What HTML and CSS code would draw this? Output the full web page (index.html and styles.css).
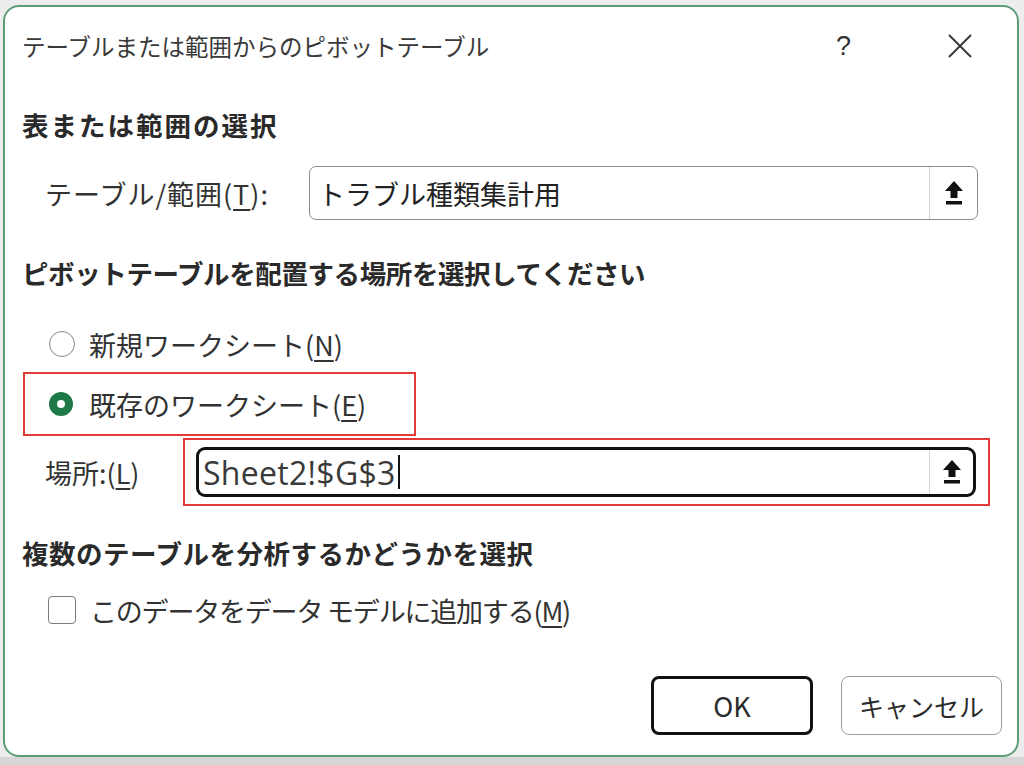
FILE: index.html
```html
<!DOCTYPE html>
<html lang="ja">
<head>
    <meta charset="UTF-8">
    <meta name="viewport" content="width=device-width, initial-scale=1.0">
    <title>テーブルまたは範囲からのピボットテーブル</title>
    <link rel="stylesheet" href="styles.css">
</head>
<body>
    <div class="dialog">
        <div class="titlebar">
            <span class="title">テーブルまたは範囲からのピボットテーブル</span>
            <span class="help">?</span>
            <svg class="close" width="26" height="26" viewBox="0 0 26 26">
                <path d="M2 2 L24 24 M24 2 L2 24" stroke="#333" stroke-width="1.8" fill="none"/>
            </svg>
        </div>

        <div class="heading h-first">表または範囲の選択</div>
        <div class="field-row range-row">
            <span class="label range-label">テーブル/範囲(<u>T</u>):</span>
            <div class="refbox">
                <span class="ref-text">トラブル種類集計用</span>
                <span class="ref-btn">
                    <svg width="22" height="26" viewBox="0 0 22 26">
                        <path d="M11 1 L2 11 H7.5 V18 H14.5 V11 H20 Z" fill="#111"/>
                        <rect x="3" y="21" width="16" height="3.5" fill="#111"/>
                    </svg>
                </span>
            </div>
        </div>

        <div class="heading h-second">ピボットテーブルを配置する場所を選択してください</div>
        <div class="option opt-new">
            <span class="radio"></span>
            <span>新規ワークシート(<u>N</u>)</span>
        </div>
        <div class="highlight hl-existing">
            <div class="option opt-existing">
                <span class="radio checked"></span>
                <span>既存のワークシート(<u>E</u>)</span>
            </div>
        </div>
        <div class="field-row loc-row">
            <span class="label loc-label">場所:(<u>L</u>)</span>
            <div class="highlight hl-location">
                <div class="refbox active">
                    <span class="ref-text sheet-ref">Sheet2!$G$3<span class="caret"></span></span>
                    <span class="ref-btn">
                        <svg width="22" height="26" viewBox="0 0 22 26">
                            <path d="M11 1 L2 11 H7.5 V18 H14.5 V11 H20 Z" fill="#111"/>
                            <rect x="3" y="21" width="16" height="3.5" fill="#111"/>
                        </svg>
                    </span>
                </div>
            </div>
        </div>

        <div class="heading h-third">複数のテーブルを分析するかどうかを選択</div>
        <div class="option opt-model">
            <span class="checkbox"></span>
            <span class="model-text">このデータをデータ モデルに追加する(<u>M</u>)</span>
        </div>

        <div class="buttons">
            <button class="btn btn-default">OK</button>
            <button class="btn btn-cancel">キャンセル</button>
        </div>
    </div>
    <div class="bottom-strip"></div>
</body>
</html>
```

FILE: styles.css
```css
body {
    margin: 0;
    background: #ededed;
    font-family: "Noto Sans CJK JP", "Liberation Sans", sans-serif;
    color: #333;
    overflow: hidden;
}
.dialog {
    margin: 5px 0 0 3px;
    width: 1016px;
    height: 752px;
    box-sizing: border-box;
    border: 2px solid #5a9e78;
    border-radius: 16px;
    background: #fff;
    padding-left: 17px;
}
.bottom-strip {
    height: 8px;
    background: #d6d6d6;
}
.titlebar {
    display: flex;
    align-items: center;
    height: 78px;
    padding-right: 44px;
}
.title {
    font-size: 23.5px;
    color: #3a3a3a;
}
.help {
    margin-left: auto;
    margin-right: 96px;
    font-family: "Liberation Sans", sans-serif;
    font-size: 27px;
    color: #333;
}
.heading {
    height: 34px;
    line-height: 34px;
    font-size: 26.5px;
    font-weight: bold;
    color: #2a2a2a;
}
.h-first {
    margin-top: 23px;
    letter-spacing: 2px;
}
.h-second {
    margin-top: 36px;
    letter-spacing: -0.4px;
}
.h-third {
    margin-top: 30px;
    letter-spacing: 0.5px;
}
u {
    text-decoration-thickness: 1.5px;
    text-underline-offset: 4px;
}
.field-row {
    display: flex;
    align-items: center;
    padding-left: 23px;
    font-size: 27px;
}
.range-row {
    margin-top: 24px;
}
.range-label {
    width: 264px;
    letter-spacing: 1px;
}
.refbox {
    display: flex;
    align-items: stretch;
    box-sizing: border-box;
    width: 669px;
    height: 54px;
    border: 1px solid #8c8c8c;
    border-radius: 7px;
}
.ref-text {
    flex: 1;
    display: flex;
    align-items: center;
    padding-left: 8px;
    font-size: 27px;
    color: #222;
}
.ref-btn {
    width: 47px;
    display: flex;
    align-items: center;
    justify-content: center;
    border-left: 1px solid #d4d4d4;
}
.option {
    display: flex;
    align-items: center;
    gap: 14px;
    height: 40px;
    font-size: 27px;
}
.opt-new {
    margin-top: 34px;
    padding-left: 27px;
}
.highlight {
    box-sizing: border-box;
    border: 2px solid #e33b3b;
}
.hl-existing {
    margin-top: 8px;
    margin-left: 1px;
    width: 393px;
    height: 64px;
}
.opt-existing {
    height: 60px;
    padding-left: 24px;
    gap: 16px;
}
.radio {
    box-sizing: border-box;
    width: 26px;
    height: 26px;
    border: 1.5px solid #858585;
    border-radius: 50%;
}
.radio.checked {
    width: 24px;
    height: 24px;
    border: 8px solid #1e7847;
}
.loc-row {
    margin-top: 2px;
}
.loc-label {
    width: 138px;
}
.hl-location {
    width: 807px;
    height: 68px;
    padding: 7px 12px 7px 11px;
}
.refbox.active {
    width: 780px;
    height: 50px;
    border: 3px solid #111;
    border-radius: 9px;
}
.refbox.active .ref-btn {
    width: 43px;
}
.sheet-ref {
    padding-left: 4px;
    font-family: "Open Sans", "Liberation Sans", sans-serif;
    font-size: 32px;
    letter-spacing: 0.3px;
    color: #3a3a3a;
}
.caret {
    display: inline-block;
    width: 2px;
    height: 34px;
    background: #111;
    margin-left: 2px;
}
.opt-model {
    margin-top: 20px;
    padding-left: 26px;
}
.model-text {
    letter-spacing: -1.2px;
}
.checkbox {
    box-sizing: border-box;
    width: 28px;
    height: 28px;
    border: 1.5px solid #7c7c7c;
    border-radius: 4px;
}
.buttons {
    display: flex;
    justify-content: flex-end;
    gap: 28px;
    margin-top: 46px;
    padding-right: 15px;
}
.btn {
    box-sizing: border-box;
    width: 161px;
    height: 59px;
    border: 1px solid #9c9c9c;
    border-radius: 8px;
    background: #fff;
    font-family: "Noto Sans CJK JP", "Liberation Sans", sans-serif;
    font-size: 25px;
    color: #2a2a2a;
    padding: 0;
}
.btn-default {
    width: 162px;
    border: 3px solid #111;
    font-size: 27px;
}
```
